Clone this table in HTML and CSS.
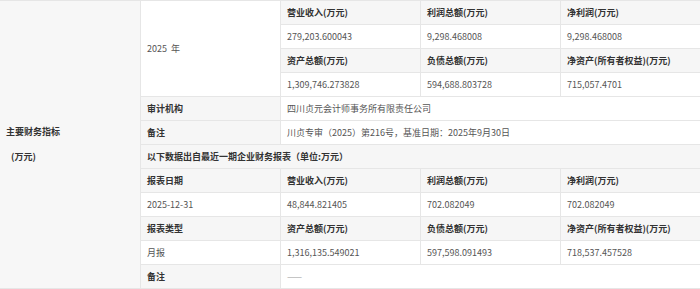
FILE: index.html
```html
<!DOCTYPE html>
<html lang="zh-CN">
<head>
<meta charset="utf-8">
<link rel="stylesheet" href="styles.css">
</head>
<body>
<table class="fin">
  <colgroup><col><col><col><col><col></colgroup>
  <tr>
    <td class="side" rowspan="12">
      <div class="side-title">主要财务指标</div>
      <div class="side-unit">(万元)</div>
    </td>
    <td class="val" rowspan="4">2025&nbsp; 年</td>
    <td class="lbl">营业收入(万元)</td>
    <td class="lbl">利润总额(万元)</td>
    <td class="lbl">净利润(万元)</td>
  </tr>
  <tr>
    <td class="val">279,203.600043</td>
    <td class="val">9,298.468008</td>
    <td class="val">9,298.468008</td>
  </tr>
  <tr>
    <td class="lbl">资产总额(万元)</td>
    <td class="lbl">负债总额(万元)</td>
    <td class="lbl">净资产(所有者权益)(万元)</td>
  </tr>
  <tr>
    <td class="val">1,309,746.273828</td>
    <td class="val">594,688.803728</td>
    <td class="val">715,057.4701</td>
  </tr>
  <tr>
    <td class="lbl">审计机构</td>
    <td class="val" colspan="3">四川贞元会计师事务所有限责任公司</td>
  </tr>
  <tr>
    <td class="lbl">备注</td>
    <td class="val" colspan="3">川贞专审（2025）第216号，基准日期：2025年9月30日</td>
  </tr>
  <tr>
    <td class="lbl" colspan="4">以下数据出自最近一期企业财务报表（单位:万元）</td>
  </tr>
  <tr>
    <td class="lbl">报表日期</td>
    <td class="lbl">营业收入(万元)</td>
    <td class="lbl">利润总额(万元)</td>
    <td class="lbl">净利润(万元)</td>
  </tr>
  <tr>
    <td class="val">2025-12-31</td>
    <td class="val">48,844.821405</td>
    <td class="val">702.082049</td>
    <td class="val">702.082049</td>
  </tr>
  <tr>
    <td class="lbl">报表类型</td>
    <td class="lbl">资产总额(万元)</td>
    <td class="lbl">负债总额(万元)</td>
    <td class="lbl">净资产(所有者权益)(万元)</td>
  </tr>
  <tr>
    <td class="val">月报</td>
    <td class="val">1,316,135.549021</td>
    <td class="val">597,598.091493</td>
    <td class="val">718,537.457528</td>
  </tr>
  <tr>
    <td class="lbl">备注</td>
    <td class="val dash" colspan="3">——</td>
  </tr>
</table>
</body>
</html>
```
FILE: styles.css
```css
html, body {
  margin: 0;
  padding: 0;
  background: #ffffff;
}
body {
  font-family: "Noto Sans CJK SC", "Liberation Sans", sans-serif;
  font-size: 9px;
  color: #555;
}
.fin {
  border-collapse: collapse;
  table-layout: fixed;
  width: 700px;
}
.fin col {
  width: 140px;
}
.fin td {
  border: 1px solid #e6e6e6;
  height: 23px;
  padding: 0 6px;
  line-height: 12px;
  white-space: nowrap;
  overflow: hidden;
  vertical-align: middle;
}
.fin td.side {
  background: #f7f7f7;
  color: #333;
  font-weight: bold;
  padding: 0 0 0 5px;
  border-left-color: #f7f7f7;
}
.side-title {
  margin-bottom: 13px;
}
.side-unit {
  padding-left: 5px;
}
.fin td.lbl {
  background: #f6f6f6;
  color: #333;
  font-weight: bold;
}
.fin td.val {
  background: #ffffff;
  color: #555;
}
.fin td.dash {
  color: #999;
}
```
